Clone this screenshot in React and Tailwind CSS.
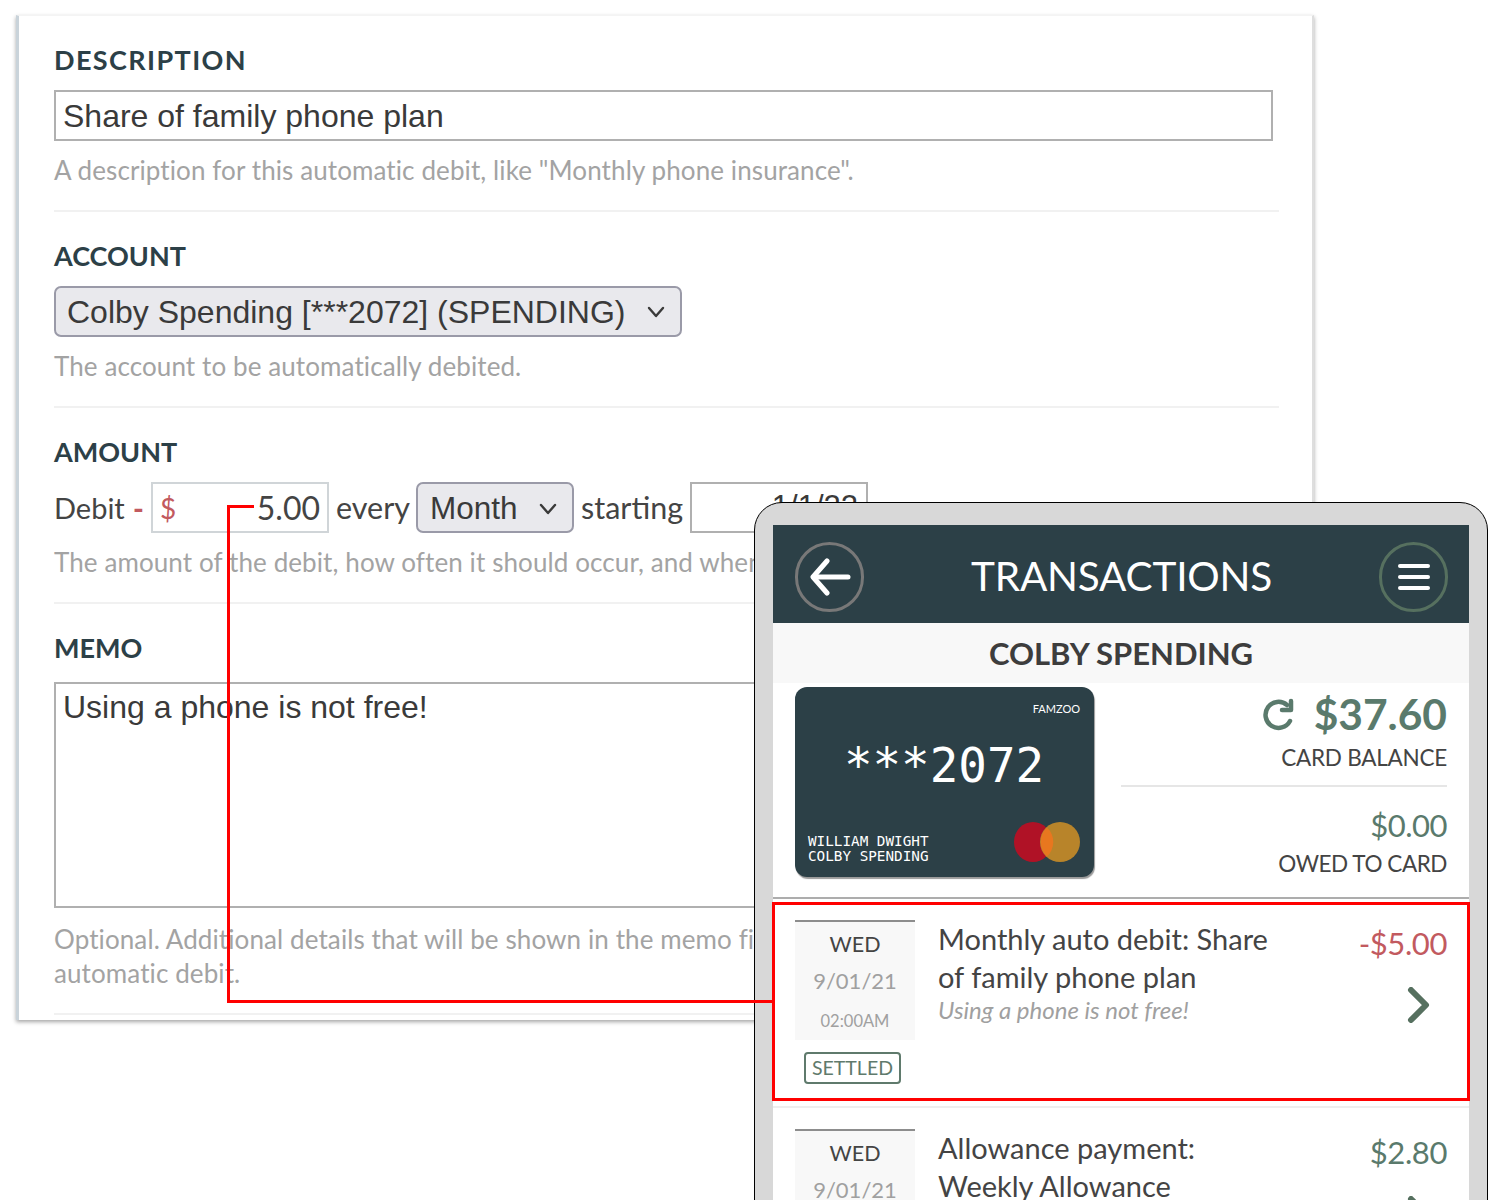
const bodyFont = "font-['Lato',sans-serif]";
const fieldFont = "font-['Liberation_Sans',Arial,sans-serif]";

const ChevronDown = ({ className }) => (
  <svg className={className} viewBox="0 0 20 12" fill="none" stroke="currentColor" strokeWidth="2.4" strokeLinecap="round" strokeLinejoin="round">
    <polyline points="3 2 10 10 17 2" />
  </svg>
);

const ChevronRight = ({ className }) => (
  <svg className={className} viewBox="0 0 24 36" fill="none" stroke="currentColor" strokeWidth="6" strokeLinecap="round" strokeLinejoin="round">
    <polyline points="5 3 20 18 5 33" />
  </svg>
);

const Section = ({ title, titleClass = '', help, children, last = false }) => (
  <div className={`w-[1225px] ${last ? '' : 'pb-[29px]'}`}>
    <h2 className={`h-[30px] leading-[30px] text-[27px] font-bold text-[#2c4047] ${titleClass}`}>{title}</h2>
    {children}
    <p className={`mt-[14px] ${last ? 'leading-[34px]' : 'leading-[30px]'} text-[26px] tracking-[0.1px] text-[#a3a3a3]`}>{help}</p>
    <div className={`${last ? 'mt-[23px]' : 'mt-[25px]'} h-[2px] bg-[#f1f1f1]`} />
  </div>
);

const TxRow = ({ title, memo, amount, amountColor, settled }) => (
  <div className="flex">
    <div className="w-[120px] shrink-0">
      <div className="h-[120px] bg-[#f8f8f8] border-t-2 border-[#8d8d8d] flex flex-col items-center">
        <span className="mt-[7px] leading-[30px] text-[21.5px] text-[#444]">WED</span>
        <span className="mt-[7px] leading-[30px] text-[22px] text-[#a0a0a0]">9/01/21</span>
        <span className="mt-[10px] leading-[30px] text-[16.5px] text-[#a0a0a0]">02:00AM</span>
      </div>
      {settled && (
        <div className="mt-[12px] ml-[9px] w-[97px] h-[32px] border-2 border-[#5f7a6c] rounded-[4px] flex items-center justify-center text-[19.5px] text-[#5f7a6c]">
          SETTLED
        </div>
      )}
    </div>
    <div className="ml-[23px] w-[350px] shrink-0">
      <p className="leading-[38px] text-[29px] text-[#444]">{title}</p>
      {memo && <p className="leading-[28px] text-[24px] italic text-[#a0a0a0]">{memo}</p>}
    </div>
    <div className="flex-1 flex flex-col items-end">
      <span className={`mt-[3px] leading-[40px] text-[31px] tracking-[-0.4px] ${amountColor}`}>{amount}</span>
      <ChevronRight className="mt-[24px] mr-[17px] w-[24px] h-[36px] text-[#56705f]" />
    </div>
  </div>
);

const PhoneScreen = () => (
  <div className="absolute left-[754px] top-[502px] w-[734px] h-[760px] border border-black rounded-[28px] bg-[#d8d8d8] pt-[22px] px-[18px]">
    <div className="h-full bg-white flex flex-col">
      {/* Header */}
      <div className="h-[98px] bg-[#2c4047] flex items-center justify-between pl-[22px] pr-[21px] pt-[5px]">
        <div className="w-[69px] h-[70px] rounded-full border-[3px] border-[#787878] flex items-center justify-center">
          <svg width="42" height="38" viewBox="0 0 42 38" fill="none" stroke="white" strokeWidth="5" strokeLinecap="round" strokeLinejoin="round">
            <polyline points="18 3 4 19 18 35" />
            <line x1="5" y1="19" x2="39" y2="19" />
          </svg>
        </div>
        <span className="text-[40.5px] leading-none text-white tracking-[-0.2px]">TRANSACTIONS</span>
        <div className="w-[69px] h-[70px] rounded-full border-[3px] border-[#56705f] flex items-center justify-center">
          <svg width="32" height="28" viewBox="0 0 32 28" fill="none" stroke="white" strokeWidth="4" strokeLinecap="round">
            <line x1="2" y1="3" x2="30" y2="3" />
            <line x1="2" y1="14" x2="30" y2="14" />
            <line x1="2" y1="25" x2="30" y2="25" />
          </svg>
        </div>
      </div>

      <div className="h-[60px] bg-[#f8f8f8] flex items-center justify-center text-[31px] font-bold text-[#3d3d3d]">
        COLBY SPENDING
      </div>

      {/* Card and balances */}
      <div className="h-[214px] shrink-0 flex pl-[22px] border-b-2 border-[#adadad] box-content">
        <div className="mt-[4px] w-[299px] h-[190px] rounded-[12px] bg-[#2c4047] shadow-[1px_2px_1px_#9a9a9a] pl-[13px] pr-[14px] pt-[14px] font-['DejaVu_Sans_Mono',monospace] text-white flex flex-col">
          <span className={`self-end text-[11px] leading-[16px] ${bodyFont}`}>FAMZOO</span>
          <span className="mt-[21px] text-center text-[47.5px] leading-[56px]">***2072</span>
          <div className="mt-[27px] flex justify-between items-start">
            <span className="mt-[13px] text-[14.3px] leading-[15px]">WILLIAM DWIGHT<br />COLBY SPENDING</span>
            <svg width="66" height="42" viewBox="0 0 66 42">
              <ellipse cx="19" cy="21" rx="19" ry="20" fill="#b01226" />
              <ellipse cx="46" cy="21" rx="20" ry="20" fill="#b8842a" />
              <path d="M33 6.5a20 20 0 0 1 0 29a20 20 0 0 1 0-29z" fill="#e8771f" />
            </svg>
          </div>
        </div>
        <div className="ml-[27px] w-[326px] flex flex-col items-end">
          <div className="mt-[6px] flex items-center gap-[19px] h-[50px]">
            <svg width="34" height="34" viewBox="0 0 34 34" fill="none" stroke="#5a7a6c" strokeWidth="4.5" strokeLinecap="round" strokeLinejoin="round">
              <path d="M29 24A13 13 0 1 1 26 8" />
              <polyline points="30 4 30 13 21 13" />
            </svg>
            <span className="text-[42.5px] font-bold leading-none text-[#5a7a6c]">$37.60</span>
          </div>
          <span className="mt-[4px] text-[22.5px] tracking-[-0.25px] leading-[30px] text-[#444]">CARD BALANCE</span>
          <div className="mt-[12px] w-full h-[2px] bg-[#e6e6e6]" />
          <span className="mt-[16px] text-[31px] tracking-[-0.5px] leading-[44px] text-[#5a7a6c]">$0.00</span>
          <span className="mt-[2px] text-[22.5px] tracking-[-0.45px] leading-[30px] text-[#444]">OWED TO CARD</span>
        </div>
      </div>

      {/* Transactions */}
      <div className="mt-[3px] -mx-px h-[199px] shrink-0 border-[3px] border-[#f00] pl-[20px] pr-[20px] pt-[15px]">
        <TxRow
          title="Monthly auto debit: Share of family phone plan"
          memo="Using a phone is not free!"
          amount="-$5.00"
          amountColor="text-[#c25a5f]"
          settled
        />
      </div>
      <div className="mt-[5px] border-t-2 border-[#eeeeee] pl-[22px] pr-[22px] pt-[21px]">
        <TxRow title="Allowance payment: Weekly Allowance" amount="$2.80" amountColor="text-[#5a7a6c]" />
      </div>
    </div>
  </div>
);

export default function App() {
  return (
    <div className={`relative h-[1200px] w-[1500px] overflow-hidden bg-white ${bodyFont}`}>
      <div className="ml-[16px] mt-[15px] w-[1298px] inline-block align-top border-l-[3px] border-l-[#c9d3da] border-r-2 border-r-[#dedede] border-t border-t-[#f4f4f4] shadow-[0_2px_4px_rgba(0,0,0,0.35)] pl-[35px] pt-[29px] pb-[5px]">
        <Section title="DESCRIPTION" titleClass="tracking-[1.4px]" help={'A description for this automatic debit, like "Monthly phone insurance".'}>
          <div className={`mt-[15px] w-[1219px] h-[51px] border-2 border-[#b0b0b0] pl-[7px] flex items-center text-[32px] text-[#3a3a3a] ${fieldFont}`}>
            Share of family phone plan
          </div>
        </Section>

        <Section title="ACCOUNT" help="The account to be automatically debited.">
          <div className={`mt-[15px] w-[628px] h-[51px] border-2 border-[#9a9aa8] rounded-[7px] bg-[#e9e9ed] pl-[11px] pr-[14px] flex items-center justify-between text-[32px] text-[#3a3a3a] ${fieldFont}`}>
            Colby Spending [***2072] (SPENDING)
            <ChevronDown className="w-[20px] h-[12px]" />
          </div>
        </Section>

        <Section title="AMOUNT" help="The amount of the debit, how often it should occur, and when it should start.">
          <div className="mt-[15px] h-[51px] flex items-center text-[29px] text-[#444] whitespace-nowrap">
            <span className="w-[79px]">Debit</span>
            <span className="w-[18px] font-black text-[#c25a5f]">-</span>
            <div className="w-[178px] h-[51px] border-2 border-[#d0d5d8] pl-[7px] pr-[7px] flex items-center justify-between text-[32px]">
              <span className="text-[#c25a5f] text-[28px]">$</span>
              <span>5.00</span>
            </div>
            <span className="ml-[7px] w-[80px] text-[30.5px]">every</span>
            <div className={`w-[158px] h-[51px] border-2 border-[#9a9aa8] rounded-[7px] bg-[#e9e9ed] pl-[12px] pr-[14px] pt-[2px] flex items-center justify-between text-[31.5px] text-[#3a3a3a] ${fieldFont}`}>
              Month
              <ChevronDown className="w-[20px] h-[12px]" />
            </div>
            <span className="ml-[7px] w-[109px] text-[30.5px]">starting</span>
            <div className={`w-[178px] h-[51px] border-2 border-[#b0b0b0] pr-[8px] flex items-center justify-end text-[31px] text-[#3a3a3a] ${fieldFont}`}>
              1/1/22
            </div>
          </div>
        </Section>

        <Section
          last
          title="MEMO"
          help={<>Optional. Additional details that will be shown in the memo field of the<br />automatic debit.</>}
        >
          <div className={`mt-[19px] w-[1219px] h-[226px] border-2 border-[#b0b0b0] pl-[7px] pt-[3px] text-[32px] leading-[40px] text-[#3a3a3a] ${fieldFont}`}>
            Using a phone is not free!
          </div>
        </Section>
      </div>

      <PhoneScreen />

      {/* Red connector from the amount field to the transaction */}
      <div className="absolute left-[227px] top-[505px] w-[27px] h-[3px] bg-[#f00]" />
      <div className="absolute left-[227px] top-[505px] w-[3px] h-[498px] bg-[#f00]" />
      <div className="absolute left-[227px] top-[1000px] w-[546px] h-[3px] bg-[#f00]" />
    </div>
  );
}
